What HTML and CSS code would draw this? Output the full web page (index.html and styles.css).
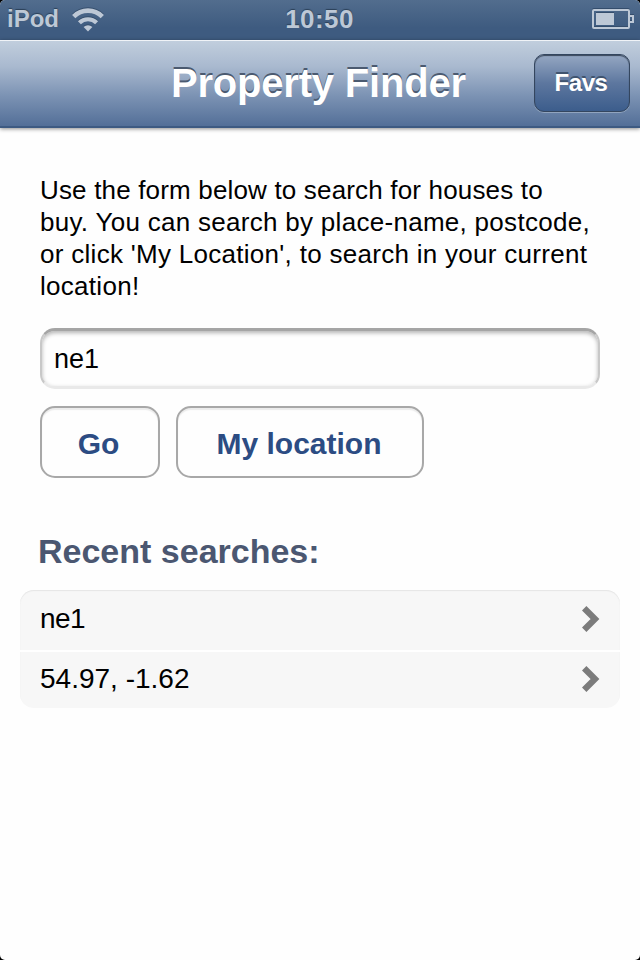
FILE: index.html
```html
<!DOCTYPE html>
<html lang="en">
<head>
<meta charset="utf-8">
<title>Property Finder</title>
<link rel="stylesheet" href="styles.css">
</head>
<body>
<div class="screen">
  <div class="status">
    <div class="carrier">
      <span class="device">iPod</span>
      <svg class="wifi" width="32" height="24" viewBox="0 0 32 24" fill="none" stroke="#bdc8d6">
        <path d="M1.7 8.6A20.2 20.2 0 0 1 30.3 8.6" stroke-width="4.6"/>
        <path d="M7.4 14.8A12.2 12.2 0 0 1 24.6 14.8" stroke-width="4.2"/>
        <path d="M11.6 19A6.3 6.3 0 0 1 20.4 19L16 23.6Z" fill="#bdc8d6" stroke="none"/>
      </svg>
    </div>
    <span class="clock">10:50</span>
    <svg class="battery" width="42" height="20" viewBox="0 0 42 20">
      <rect x="1" y="1" width="36" height="18" rx="1" fill="none" stroke="#bdc8d6" stroke-width="2"/>
      <rect x="4" y="4" width="18" height="12" fill="#bdc8d6"/>
      <path d="M38 7h3v6h-3" fill="none" stroke="#bdc8d6" stroke-width="2"/>
    </svg>
  </div>
  <header class="nav">
    <h1>Property Finder</h1>
    <button class="favs" type="button">Favs</button>
  </header>
  <main>
    <p class="intro"><span class="lead">Use the form below to search for houses to</span><br>buy. You can search by place-name, postcode,<br>or click 'My Location', to search in your current<br>location!</p>
    <div class="field">ne1</div>
    <div class="actions">
      <button class="go" type="button">Go</button>
      <button class="locate" type="button">My location</button>
    </div>
    <h2>Recent searches:</h2>
    <ul class="recent">
      <li><span class="place">ne1</span><svg width="18" height="28" viewBox="0 0 18 28"><path d="M2.2 3.2L13 14L2.2 24.8" fill="none" stroke="#7c7c7c" stroke-width="6.2"/></svg></li>
      <li><span>54.97, -1.62</span><svg width="18" height="28" viewBox="0 0 18 28"><path d="M2.2 3.2L13 14L2.2 24.8" fill="none" stroke="#7c7c7c" stroke-width="6.2"/></svg></li>
    </ul>
  </main>
</div>
</body>
</html>
```
FILE: styles.css
```css
* { box-sizing: border-box; }
body { margin: 0; background: #000; font-family: "Liberation Sans", Arial, sans-serif; }
.screen { height: 960px; background: #fefefe; border-radius: 5px; overflow: hidden; }
.status {
  height: 40px; padding: 0 6px 2px 7px;
  display: grid; grid-template-columns: 1fr auto 1fr; align-items: center;
  background: linear-gradient(#526d8e, #3e5b80 70%, #3e5b80);
  color: #bdc8d6; font-size: 24px; font-weight: bold; line-height: 38px;
  text-shadow: 0 -1px 1px #2b4058;
}
.carrier { display: flex; align-items: center; gap: 13px; }
.wifi, .battery { filter: drop-shadow(0 -1px 0 #344d6c); }
.wifi { margin-top: 1px; }
.clock { font-size: 26px; letter-spacing: 0.4px; padding-right: 2px; }
.battery { justify-self: end; }
.nav {
  height: 88px; padding: 0 10px 2px 171px;
  display: flex; align-items: center; justify-content: space-between;
  background: linear-gradient(#c1cedd, #a9b9cf 30%, #7b92b3 65%, #536f98);
  border-top: 1px solid #f0f3f7; border-bottom: 2px solid #3d5a82;
  box-shadow: 0 1px 4px rgba(0,0,0,.45);
}
h1 { margin: 0; color: #fff; font-size: 40px; line-height: 84px; letter-spacing: -0.2px; white-space: nowrap; text-shadow: 0 -2px 0 #4b5a70; }
.favs {
  width: 96px; height: 58px; padding: 0; border: 1px solid #34465f; border-radius: 10px;
  background: linear-gradient(#95a7c2, #5d779f 50%, #3c5d8c);
  box-shadow: inset 0 1px 1px #39475a, 0 1px 0 #91a4be;
  color: #fff; font: bold 24px "Liberation Sans", sans-serif; letter-spacing: -0.4px; padding-right: 2px; text-shadow: 0 -2px 0 #40546f;
}
main { padding: 46px 20px 0; }
.intro { margin: 0 0 26px 20px; font-size: 26px; line-height: 32px; letter-spacing: 0.29px; white-space: nowrap; color: #000; }
.lead { letter-spacing: 0.17px; }
.field {
  height: 61px; margin: 0 20px; padding: 0 12px; border: 2px solid; border-width: 3px 2px; border-color: #a5a5a5 #c8c8c8 #e9e9e9;
  border-radius: 15px; box-shadow: inset 0 2px 4px rgba(0,0,0,.3);
  font-size: 27px; line-height: 56px;
}
.actions { display: flex; gap: 16px; margin: 17px 20px 0; }
.actions button {
  height: 72px; padding: 3px 0 0; border: 2px solid #a8a8a8; border-radius: 15px; background: #fefefe;
  box-shadow: inset 0 2px 1px #ececec; color: #2c4c83; font: bold 30px "Liberation Sans", sans-serif;
}
.actions .go { width: 120px; padding-right: 3px; }
.actions .locate { width: 248px; padding-right: 2px; }
h2 { margin: 53px 0 0 18px; font-size: 34px; line-height: 40px; color: #4b5771; white-space: nowrap; }
.recent { list-style: none; margin: 19px 0 0; padding: 0; border-radius: 14px; overflow: hidden; background: #f7f7f7; box-shadow: inset 0 1px 1px #e5e5e5; }
.recent li { padding: 0 20px; display: flex; align-items: center; justify-content: space-between; font-size: 28px; line-height: 60px; }
.recent li:first-child { height: 62px; padding-bottom: 2px; border-bottom: 2px solid #fff; }
.recent li:last-child { height: 56px; padding-bottom: 2px; }
.place { letter-spacing: -0.6px; }
```
